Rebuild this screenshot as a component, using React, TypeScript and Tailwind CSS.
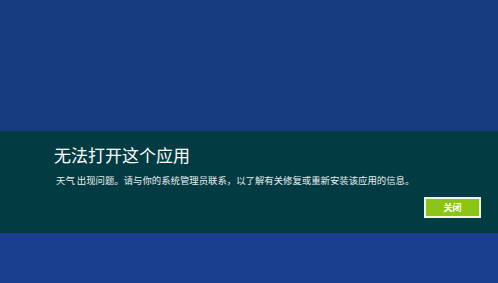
export default function App() {
  return (
    <div
      className="w-[498px] h-[283px] bg-[#183c80] flex flex-col"
      style={{ fontFamily: '"Noto Sans CJK SC", "Microsoft YaHei", sans-serif' }}
    >
      <div className="h-[131px]" />
      <div className="h-[102px] bg-[#033b42] pl-[54px] pr-[17px] pt-[10px] flex flex-col">
        <h1 className="text-[17px] leading-[28px] text-white">无法打开这个应用</h1>
        <p className="mt-[4px] text-[9.4px] leading-[14px] text-[#e6eeee] pl-[2px]">
          天气 出现问题。请与你的系统管理员联系，以了解有关修复或重新安装该应用的信息。
        </p>
        <div className="mt-[10px] flex justify-end">
          <button className="w-[57px] h-[21px] bg-[#8cc414] border-2 border-[#f0f6e4] text-white text-[9px] font-bold flex items-center justify-center">
            关闭
          </button>
        </div>
      </div>
      <div className="flex-1 bg-[#1a3e8e]" />
    </div>
  );
}
